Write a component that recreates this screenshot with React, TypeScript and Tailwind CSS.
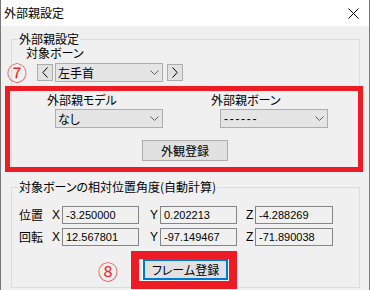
import React from "react";

function Chevron() {
  return (
    <svg width="9" height="5" viewBox="0 0 9 5" className="block">
      <polyline points="0.5,0.5 4.5,4.5 8.5,0.5" fill="none" stroke="#606060" strokeWidth="1" />
    </svg>
  );
}

function Combo({ text, className, mono }: { text: string; className: string; mono?: boolean }) {
  return (
    <div className={"flex items-center justify-between h-[19px] bg-[#e5e5e5] border border-[#adadad] pl-[2px] pr-[3px] " + className}>
      {mono ? (
        <span className="font-['Liberation_Sans',sans-serif] tracking-[1.7px] leading-[14px] pl-[1px]">{text}</span>
      ) : (
        <span className="leading-[14px]">{text}</span>
      )}
      <Chevron />
    </div>
  );
}

function ArrowBtn({ dir, className }: { dir: "l" | "r"; className: string }) {
  return (
    <div className={"w-[16px] h-[17px] bg-[#e1e1e1] border border-[#adadad] flex items-center justify-center " + className}>
      <svg width="6" height="11" viewBox="0 0 6 11" className="block">
        {dir === "l" ? (
          <polyline points="5.5,0.5 0.8,5.5 5.5,10.5" fill="none" stroke="#000" strokeWidth="1" />
        ) : (
          <polyline points="0.5,0.5 5.2,5.5 0.5,10.5" fill="none" stroke="#000" strokeWidth="1" />
        )}
      </svg>
    </div>
  );
}

function Field({ v, className }: { v: string; className: string }) {
  return (
    <div className={"h-[18px] border border-[#858585] bg-[#f0f0f0] pl-[3px] flex items-center font-['Liberation_Sans',sans-serif] text-[11px] leading-[14px] " + className}>
      {v}
    </div>
  );
}

function Row({ label, x, y, z, className }: { label: string; x: string; y: string; z: string; className: string }) {
  return (
    <div className={"flex items-center ml-[7px] h-[18px] " + className}>
      <span className="w-[33px] leading-[14px]">{label}</span>
      <span className="w-[10px] leading-[14px] font-['Liberation_Sans',sans-serif]">X</span>
      <Field v={x} className="w-[77px]" />
      <span className="w-[21px] pl-[11px] leading-[14px] font-['Liberation_Sans',sans-serif]">Y</span>
      <Field v={y} className="w-[77px]" />
      <span className="w-[18px] pl-[9px] leading-[14px] font-['Liberation_Sans',sans-serif]">Z</span>
      <Field v={z} className="w-[78px]" />
    </div>
  );
}

export default function App() {
  return (
    <div className="w-[370px] h-[290px] bg-[#f0f0f0] border-x border-[#777777] overflow-hidden relative font-['Noto_Sans_CJK_JP',sans-serif] text-[12px] text-black [font-feature-settings:'palt']">
      <div className="h-[26px] bg-white flex items-center justify-between pl-[3px] pr-[10px]">
        <span className="leading-[14px]">外部親設定</span>
        <svg width="11" height="11" viewBox="0 0 11 11" className="block">
          <line x1="0.5" y1="0.5" x2="10.5" y2="10.5" stroke="#000" strokeWidth="1" />
          <line x1="10.5" y1="0.5" x2="0.5" y2="10.5" stroke="#000" strokeWidth="1" />
        </svg>
      </div>

      <div className="ml-[10px] mt-[13px] w-[349px] border border-[#dcdcdc]">
        <div className="-mt-[8px] ml-[6px] px-[1px] w-fit bg-[#f0f0f0] leading-[14px]">外部親設定</div>
        <div className="ml-[14px] leading-[14px]">対象ボーン</div>
        <div className="mt-[3px] ml-[25px] flex items-center h-[19px]">
          <ArrowBtn dir="l" className="" />
          <Combo text="左手首" className="ml-[2px] w-[108px]" />
          <ArrowBtn dir="r" className="ml-[4px]" />
        </div>
        <div className="mt-[4px] -ml-[7px] w-[358px] h-[86px] border-[5px] border-[#ed1c24] -mb-[5px] relative">
          <div className="flex pt-[2px]">
            <div className="ml-[37px] w-[164px]">
              <div className="leading-[14px]">外部親モデル</div>
              <Combo text="なし" className="mt-[2px] ml-[8px] w-[108px]" />
            </div>
            <div>
              <div className="leading-[14px]">外部親ボーン</div>
              <Combo text="------" mono className="mt-[2px] ml-[9px] w-[108px]" />
            </div>
          </div>
          <button className="block mt-[12px] ml-[132px] w-[86px] h-[21px] bg-[#e1e1e1] border border-[#adadad] leading-[14px] text-center">
            外観登録
          </button>
        </div>
      </div>

      <div className="ml-[10px] mt-[19px] w-[349px] border border-[#dcdcdc]">
        <div className="-mt-[8px] ml-[6px] px-[1px] w-fit bg-[#f0f0f0] leading-[14px]">対象ボーンの相対位置角度(自動計算)</div>
        <Row label="位置" x="-3.250000" y="0.202213" z="-4.288269" className="mt-[12px]" />
        <Row label="回転" x="12.567801" y="-97.149467" z="-71.890038" className="mt-[4px]" />
        <div className="mt-[5px] ml-[119px] w-[106px] h-[38px] border-[8px] border-[#ed1c24] -mb-[2px] relative">
          <button className="block ml-[4px] w-[85px] h-[21px] bg-[#e1e1e1] border-2 border-[#0078d7] leading-[14px] text-center">
            フレーム登録
          </button>
        </div>
      </div>

      <div className="absolute left-[4px] top-[61px] w-[24px] h-[24px] flex items-center justify-center text-[20px] leading-none text-[#ee2a2a]">⑦</div>
      <div className="absolute left-[95px] top-[260px] w-[24px] h-[24px] flex items-center justify-center text-[20px] leading-none text-[#ee2a2a]">⑧</div>
    </div>
  );
}
